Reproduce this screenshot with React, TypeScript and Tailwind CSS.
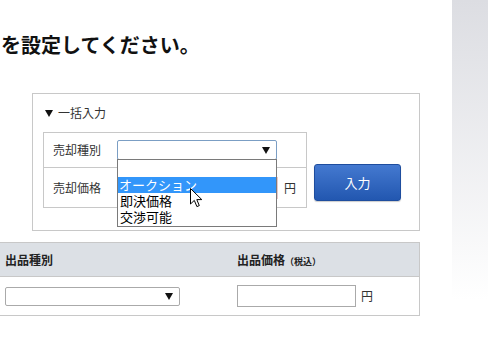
import React from 'react';

const font = { fontFamily: '"Noto Sans CJK JP", "Noto Sans", sans-serif' };

const Arrow: React.FC = () => (
    <svg width="8" height="7" viewBox="0 0 8 7" className="shrink-0">
        <path d="M0 0 H8 L4 7 Z" fill="#111" />
    </svg>
);

const Cursor: React.FC = () => (
    <svg width="13" height="20" viewBox="0 0 13 20" className="absolute left-[190px] top-[188px]">
        <path d="M0.5 0.5 L0.5 16 L4.3 12.4 L6.9 18.6 L9.3 17.6 L6.8 11.6 L11.8 11.6 Z" fill="#fff" stroke="#000" strokeWidth="1" strokeLinejoin="round" />
    </svg>
);

export default function App() {
    return (
        <div className="relative w-[488px] h-[363px] bg-white overflow-hidden flex text-[#333]" style={font}>
            <div className="w-[452px] flex flex-col">
                <h1 className="mt-[33px] pl-[1px] text-[20px] leading-[24px] font-bold text-[#111] whitespace-nowrap">を設定してください。</h1>

                {/* bulk input box */}
                <div className="mt-[36px] ml-[32px] w-[388px] h-[138px] border border-[#c8c8c8]">
                    <div className="pt-[11px] pl-[12px] text-[12px] leading-[16px] flex items-center gap-[5px]">
                        <Arrow />
                        <span>一括入力</span>
                    </div>
                    <div className="mt-[11px] ml-[10px] flex items-start">
                        <div className="w-[264px] border border-[#c8c8c8]">
                            <div className="h-[35px] flex items-center border-b border-[#c8c8c8]">
                                <div className="w-[73px] pl-[9px] text-[12px]">売却種別</div>
                                <div className="w-[160px] h-[20px] border border-[#7b9ec4] rounded-[2px] bg-white flex items-center justify-end pr-[6px]">
                                    <Arrow />
                                </div>
                            </div>
                            <div className="h-[39px] flex items-center">
                                <div className="w-[73px] pl-[9px] text-[12px]">売却価格</div>
                                <div className="w-[161px] h-[22px] border border-[#e8c8c8] bg-white" />
                                <span className="ml-[6px] text-[12px]">円</span>
                            </div>
                        </div>
                        <button className="mt-[32px] ml-[7px] w-[87px] h-[37px] rounded-[3px] border border-[#1e4d9e] bg-gradient-to-b from-[#4479d0] to-[#2257b0] text-white text-[13px] shadow-[0_1px_1px_rgba(0,0,0,0.2)]">
                            入力
                        </button>
                    </div>
                </div>

                {/* listing table */}
                <div className="mt-[11px] w-[420px] border-t border-r border-b border-[#c8c8c8]">
                    <div className="h-[34px] bg-[#dce0e5] border-b border-[#c8c8c8] flex items-center text-[12px] font-bold text-[#222]">
                        <div className="w-[232px] pl-[5px]">出品種別</div>
                        <div className="pl-[5px]">
                            出品価格<span className="text-[9px] font-bold">（税込）</span>
                        </div>
                    </div>
                    <div className="h-[38px] flex items-center">
                        <div className="w-[232px] pl-[5px]">
                            <div className="w-[175px] h-[19px] border border-[#aaa] rounded-[2px] flex items-center justify-end pr-[6px]">
                                <Arrow />
                            </div>
                        </div>
                        <div className="pl-[5px] flex items-center">
                            <div className="w-[119px] h-[22px] border border-[#aaa]" />
                            <span className="ml-[5px] text-[12px]">円</span>
                        </div>
                    </div>
                </div>
            </div>

            <div className="w-[36px] h-[300px] bg-gradient-to-b from-[#dcdde2] to-white" />

            {/* open dropdown list */}
            <div className="absolute left-[117px] top-[159px] w-[160px] h-[68px] border border-[#7a7a7a] bg-white text-[13px] leading-[16px] text-black">
                <div className="h-[17px]" />
                <div className="h-[16px] bg-[#3296fa] text-white pl-[1px]">オークション</div>
                <div className="h-[16px] pl-[2px]">即決価格</div>
                <div className="h-[16px] pl-[2px]">交渉可能</div>
            </div>

            <Cursor />
        </div>
    );
}
